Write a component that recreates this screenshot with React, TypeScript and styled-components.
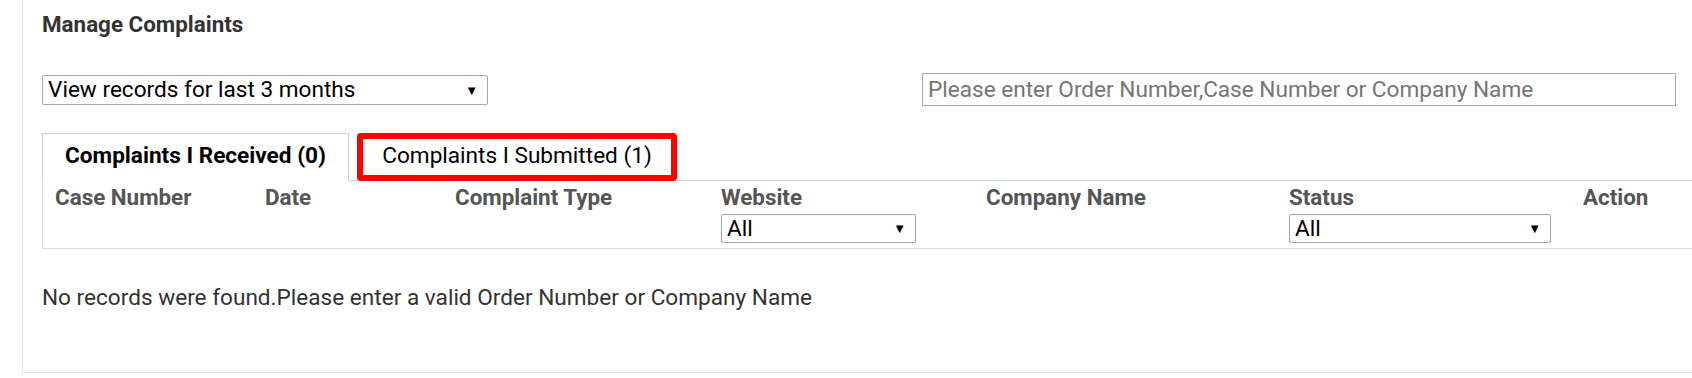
import React from "react";
import styled, { createGlobalStyle } from "styled-components";

const GlobalStyle = createGlobalStyle`
  html, body {
    margin: 0;
    padding: 0;
    background: #ffffff;
    overflow: hidden;
  }
  body {
    font-family: Roboto, "Liberation Sans", Arial, sans-serif;
    color: #333333;
  }
`;

const Page = styled.div`
  margin-left: 22px;
  height: 373px;
  box-sizing: border-box;
  border-left: 1px solid #d8e4f1;
  border-bottom: 1px solid #d8e4f1;
  padding: 11px 16px 0 19px;
`;

const Title = styled.h2`
  margin: 0;
  font-size: 22.4px;
  line-height: 26px;
  font-weight: 700;
  color: #333333;
`;

const Controls = styled.div`
  display: flex;
  justify-content: space-between;
  align-items: center;
  margin-top: 36px;
`;

const SelectWrap = styled.div<{ $width: number; $height?: number }>`
  position: relative;
  width: ${({ $width }) => $width}px;
  height: ${({ $height }) => $height ?? 30}px;
`;

const Select = styled.select`
  appearance: none;
  width: 100%;
  height: 100%;
  box-sizing: border-box;
  margin: 0;
  padding: 0 24px 0 5px;
  border: 1px solid #a6a6a6;
  border-radius: 2px;
  background: #ffffff;
  font-family: Roboto, "Liberation Sans", Arial, sans-serif;
  font-size: 22.6px;
  color: #000000;
`;

const Arrow = styled.span`
  position: absolute;
  right: 10px;
  top: 50%;
  transform: translateY(-50%);
  font-size: 13px;
  color: #000000;
  pointer-events: none;
`;

const Search = styled.input`
  width: 754px;
  height: 33px;
  box-sizing: border-box;
  margin: 0;
  padding: 0 5px;
  border: 1px solid #a9a9a9;
  font-family: Roboto, "Liberation Sans", Arial, sans-serif;
  font-size: 22.6px;
  color: #000000;
  &::placeholder {
    color: #757575;
  }
`;

const TabList = styled.div`
  display: flex;
  gap: 8px;
  margin-top: 27px;
  margin-right: -16px;
  border-bottom: 1px solid #c8d3e0;
`;

const Tab = styled.button<{ $active?: boolean; $marked?: boolean; $width: number }>`
  width: ${({ $width }) => $width}px;
  height: 48px;
  box-sizing: border-box;
  margin: 0 0 -1px 0;
  padding: 0 0 4px;
  background: #ffffff;
  font-family: Roboto, "Liberation Sans", Arial, sans-serif;
  font-size: 22.6px;
  font-weight: ${({ $active }) => ($active ? 700 : 400)};
  color: #000000;
  cursor: pointer;
  border: ${({ $marked }) =>
    $marked ? "6px solid #ff0000" : "1px solid #c8d3e0"};
  border-bottom-color: ${({ $active, $marked }) =>
    $marked ? "#ff0000" : $active ? "#ffffff" : "#c8d3e0"};
  border-radius: ${({ $marked }) => ($marked ? "4px" : "0")};
`;

const Table = styled.div`
  margin-right: -16px;
  border-left: 1px solid #dddddd;
  border-bottom: 1px solid #dddddd;
`;

const HeaderRow = styled.div`
  display: grid;
  grid-template-columns: 210px 190px 266px 265px 303px 294px 1fr;
  height: 67px;
`;

const HeadCell = styled.div`
  display: flex;
  flex-direction: column;
  gap: 5px;
  padding: 4px 12px 0;
  font-size: 22.4px;
  line-height: 24px;
  font-weight: 700;
  color: #555555;
  white-space: nowrap;
`;

const Message = styled.p`
  margin: 36px 0 0;
  font-size: 22.6px;
  line-height: 26px;
  color: #333333;
`;

type Column = {
  label: string;
  filter?: number;
};

const columns: Column[] = [
  { label: "Case Number" },
  { label: "Date" },
  { label: "Complaint Type" },
  { label: "Website", filter: 195 },
  { label: "Company Name" },
  { label: "Status", filter: 262 },
  { label: "Action" },
];

function Dropdown({
  value,
  width,
  height,
}: {
  value: string;
  width: number;
  height?: number;
}) {
  return (
    <SelectWrap $width={width} $height={height}>
      <Select defaultValue={value}>
        <option>{value}</option>
      </Select>
      <Arrow>▼</Arrow>
    </SelectWrap>
  );
}

export default function App() {
  return (
    <>
      <GlobalStyle />
      <Page>
        <Title>Manage Complaints</Title>
        <Controls>
          <Dropdown value="View records for last 3 months" width={446} />
          <Search placeholder="Please enter Order Number,Case Number or Company Name" />
        </Controls>
        <TabList>
          <Tab $active $width={307}>
            Complaints I Received (0)
          </Tab>
          <Tab $marked $width={320}>
            Complaints I Submitted (1)
          </Tab>
        </TabList>
        <Table>
          <HeaderRow>
            {columns.map((c) => (
              <HeadCell key={c.label}>
                {c.label}
                {c.filter && <Dropdown value="All" width={c.filter} height={29} />}
              </HeadCell>
            ))}
          </HeaderRow>
        </Table>
        <Message>
          No records were found.Please enter a valid Order Number or Company Name
        </Message>
      </Page>
    </>
  );
}
